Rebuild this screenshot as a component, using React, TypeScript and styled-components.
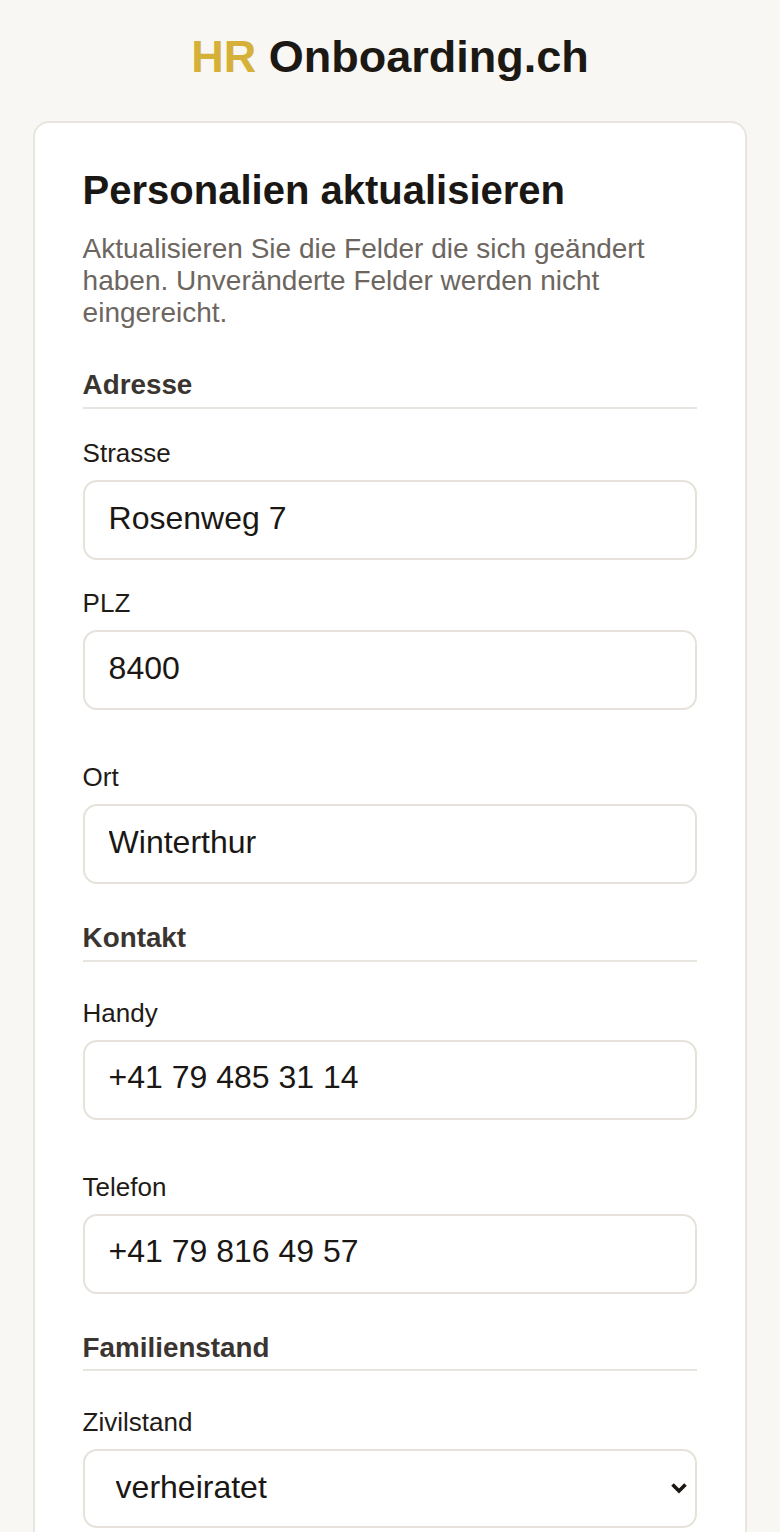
import React from 'react';
import styled, {createGlobalStyle} from "styled-components";

const GlobalStyle = createGlobalStyle`
    body {
        margin: 0;
        background-color: #f8f7f3;
        font-family: "Liberation Sans", Arial, sans-serif;
        color: #1c1915;
    }
    * {
        box-sizing: border-box;
    }
`

type FieldDef = {
    id: string;
    label: string;
    value: string;
}

const adresse: FieldDef[] = [
    {id: 'plz', label: 'PLZ', value: '8400'},
    {id: 'ort', label: 'Ort', value: 'Winterthur'},
];

const kontakt: FieldDef[] = [
    {id: 'handy', label: 'Handy', value: '+41 79 485 31 14'},
    {id: 'telefon', label: 'Telefon', value: '+41 79 816 49 57'},
];

const TextField = ({id, label, value}: FieldDef) => (
    <Field>
        <Label htmlFor={id}>{label}</Label>
        <Input id={id} type="text" defaultValue={value}/>
    </Field>
);

const ChevronDown = () => (
    <Chevron width="18" height="12" viewBox="0 0 18 12" aria-hidden="true">
        <polyline points="2.5,2.5 9,9 15.5,2.5" fill="none" stroke="#1a1714" strokeWidth="3.6"
                  strokeLinejoin="miter"/>
    </Chevron>
);

export default function App() {
    return (
        <>
            <GlobalStyle/>
            <Page>
                <Brand><Accent>HR</Accent> Onboarding.ch</Brand>
                <Card>
                    <Title>Personalien aktualisieren</Title>
                    <Intro>
                        Aktualisieren Sie die Felder die sich geändert haben. Unveränderte Felder werden nicht
                        eingereicht.
                    </Intro>

                    <Section>
                        <SectionTitle $gap={29.4}>Adresse</SectionTitle>
                        <TextField id="strasse" label="Strasse" value="Rosenweg 7"/>
                        <Row>
                            {adresse.map(f => <TextField key={f.id} {...f}/>)}
                        </Row>
                    </Section>

                    <Section>
                        <SectionTitle>Kontakt</SectionTitle>
                        <Row>
                            {kontakt.map(f => <TextField key={f.id} {...f}/>)}
                        </Row>
                    </Section>

                    <Section>
                        <SectionTitle>Familienstand</SectionTitle>
                        <Row>
                            <Field>
                                <Label htmlFor="zivilstand">Zivilstand</Label>
                                <SelectWrap>
                                    <Select id="zivilstand" defaultValue="verheiratet">
                                        <option value="ledig">ledig</option>
                                        <option value="verheiratet">verheiratet</option>
                                        <option value="geschieden">geschieden</option>
                                        <option value="verwitwet">verwitwet</option>
                                    </Select>
                                    <ChevronDown/>
                                </SelectWrap>
                            </Field>
                        </Row>
                    </Section>
                </Card>
            </Page>
        </>
    );
}

const Page = styled.div`
    padding: 32px 33px 40px;
`
const Brand = styled.h1`
    margin: 0 0 38px;
    text-align: center;
    font-size: 45px;
    font-weight: 700;
    line-height: 50.6px;
    color: #1c1915;
`
const Accent = styled.span`
    color: #d6b13a;
`
const Card = styled.div`
    background-color: #fff;
    border: 2px solid #e8e5df;
    border-radius: 16px;
    padding: 44.8px 47.6px 48px;
`
const Title = styled.h2`
    margin: 0 0 19.8px;
    font-size: 40px;
    font-weight: 700;
    line-height: 46px;
    color: #1a1714;
`
const Intro = styled.p`
    margin: 0 0 40px;
    font-size: 28px;
    line-height: 32px;
    color: #6d665f;
`
const Section = styled.section`
    margin-top: 10px;
`
const SectionTitle = styled.h3<{ $gap?: number }>`
    margin: 0 0 ${p => p.$gap ?? 35.5}px;
    padding-bottom: 5.8px;
    border-bottom: 2px solid #e8e4df;
    font-size: 27.8px;
    font-weight: 700;
    line-height: normal;
    color: #3a3530;
`
const Row = styled.div`
    display: grid;
    grid-template-columns: 1fr;
    row-gap: 24px;
`
const Field = styled.div`
    margin-bottom: 28px;
`
const Label = styled.label`
    display: block;
    margin-bottom: 11px;
    font-size: 26px;
    line-height: normal;
    color: #1f1b17;
`
const Input = styled.input`
    display: block;
    width: 100%;
    padding: 17.5px 24px 21.5px;
    border: 2px solid #e6e2db;
    border-radius: 14px;
    background-color: #fff;
    font-family: inherit;
    font-size: 32px;
    color: #1a1714;
    outline: none;
`
const SelectWrap = styled.div`
    position: relative;
`
const Select = styled.select`
    display: block;
    width: 100%;
    appearance: none;
    padding: 18px 48px 21px 31px;
    border: 2px solid #e6e2db;
    border-radius: 14px;
    background-color: #fff;
    font-family: inherit;
    font-size: 32px;
    line-height: normal;
    color: #1a1714;
    outline: none;
`
const Chevron = styled.svg`
    position: absolute;
    right: 9px;
    top: 50%;
    transform: translateY(-50%);
    pointer-events: none;
`
